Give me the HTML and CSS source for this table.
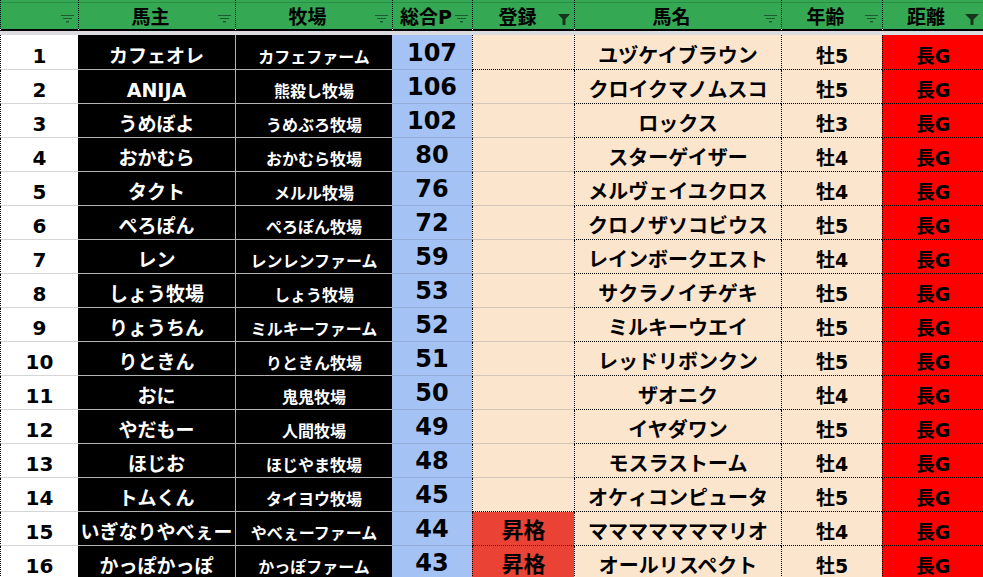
FILE: index.html
```html
<!DOCTYPE html>
<html lang="ja">
<head>
<meta charset="utf-8">
<title>Sheet</title>
<link rel="stylesheet" href="styles.css">
</head>
<body>
<div class="sheet">
  <div class="hc"><span class="ht"></span><svg class="fi" width="13" height="8" viewBox="0 0 13 8"><rect x="0" y="0" width="13" height="1"/><rect x="2" y="3" width="9" height="1"/><rect x="5" y="6" width="3" height="1.5"/></svg></div>
  <div class="hc"><span class="ht">馬主</span><svg class="fi" width="13" height="8" viewBox="0 0 13 8"><rect x="0" y="0" width="13" height="1"/><rect x="2" y="3" width="9" height="1"/><rect x="5" y="6" width="3" height="1.5"/></svg></div>
  <div class="hc"><span class="ht">牧場</span><svg class="fi" width="13" height="8" viewBox="0 0 13 8"><rect x="0" y="0" width="13" height="1"/><rect x="2" y="3" width="9" height="1"/><rect x="5" y="6" width="3" height="1.5"/></svg></div>
  <div class="hc"><span class="ht">総合P</span><svg class="fi" width="13" height="8" viewBox="0 0 13 8"><rect x="0" y="0" width="13" height="1"/><rect x="2" y="3" width="9" height="1"/><rect x="5" y="6" width="3" height="1.5"/></svg></div>
  <div class="hc"><span class="ht">登録</span><svg class="ff" width="12" height="11" viewBox="0 0 12 11"><polygon points="0,0 12,0 7.5,5 7.5,11 4.5,11 4.5,5"/></svg></div>
  <div class="hc"><span class="ht">馬名</span><svg class="fi" width="13" height="8" viewBox="0 0 13 8"><rect x="0" y="0" width="13" height="1"/><rect x="2" y="3" width="9" height="1"/><rect x="5" y="6" width="3" height="1.5"/></svg></div>
  <div class="hc"><span class="ht">年齢</span><svg class="fi" width="13" height="8" viewBox="0 0 13 8"><rect x="0" y="0" width="13" height="1"/><rect x="2" y="3" width="9" height="1"/><rect x="5" y="6" width="3" height="1.5"/></svg></div>
  <div class="hc"><span class="ht">距離</span><svg class="ff" width="14" height="11" viewBox="0 0 14 11"><polygon points="0,0 14,0 8.5,5.5 8.5,11 5.5,11 5.5,5.5"/></svg></div>

  <div class="freeze"></div>

  <div class="c num">1</div><div class="c owner">カフェオレ</div><div class="c farm">カフェファーム</div><div class="c pts">107</div><div class="c reg dot"></div><div class="c horse">ユヅケイブラウン</div><div class="c age">牡5</div><div class="c dist">長G</div>
  <div class="c num">2</div><div class="c owner">ANIJA</div><div class="c farm">熊殺し牧場</div><div class="c pts">106</div><div class="c reg"></div><div class="c horse">クロイクマノムスコ</div><div class="c age">牡5</div><div class="c dist">長G</div>
  <div class="c num">3</div><div class="c owner">うめぼよ</div><div class="c farm">うめぶろ牧場</div><div class="c pts">102</div><div class="c reg"></div><div class="c horse">ロックス</div><div class="c age">牡3</div><div class="c dist">長G</div>
  <div class="c num">4</div><div class="c owner">おかむら</div><div class="c farm">おかむら牧場</div><div class="c pts">80</div><div class="c reg"></div><div class="c horse">スターゲイザー</div><div class="c age">牡4</div><div class="c dist">長G</div>
  <div class="c num">5</div><div class="c owner">タクト</div><div class="c farm">メルル牧場</div><div class="c pts">76</div><div class="c reg"></div><div class="c horse">メルヴェイユクロス</div><div class="c age">牡4</div><div class="c dist">長G</div>
  <div class="c num">6</div><div class="c owner">ぺろぽん</div><div class="c farm">ぺろぽん牧場</div><div class="c pts">72</div><div class="c reg"></div><div class="c horse">クロノザソコビウス</div><div class="c age">牡5</div><div class="c dist">長G</div>
  <div class="c num">7</div><div class="c owner">レン</div><div class="c farm">レンレンファーム</div><div class="c pts">59</div><div class="c reg"></div><div class="c horse">レインボークエスト</div><div class="c age">牡4</div><div class="c dist">長G</div>
  <div class="c num">8</div><div class="c owner">しょう牧場</div><div class="c farm">しょう牧場</div><div class="c pts">53</div><div class="c reg"></div><div class="c horse">サクラノイチゲキ</div><div class="c age">牡5</div><div class="c dist">長G</div>
  <div class="c num">9</div><div class="c owner">りょうちん</div><div class="c farm">ミルキーファーム</div><div class="c pts">52</div><div class="c reg"></div><div class="c horse">ミルキーウエイ</div><div class="c age">牡5</div><div class="c dist">長G</div>
  <div class="c num">10</div><div class="c owner">りときん</div><div class="c farm">りときん牧場</div><div class="c pts">51</div><div class="c reg"></div><div class="c horse">レッドリボンクン</div><div class="c age">牡5</div><div class="c dist">長G</div>
  <div class="c num">11</div><div class="c owner">おに</div><div class="c farm">鬼鬼牧場</div><div class="c pts">50</div><div class="c reg"></div><div class="c horse">ザオニク</div><div class="c age">牡4</div><div class="c dist">長G</div>
  <div class="c num">12</div><div class="c owner">やだもー</div><div class="c farm">人間牧場</div><div class="c pts">49</div><div class="c reg"></div><div class="c horse">イヤダワン</div><div class="c age">牡5</div><div class="c dist">長G</div>
  <div class="c num">13</div><div class="c owner">ほじお</div><div class="c farm">ほじやま牧場</div><div class="c pts">48</div><div class="c reg"></div><div class="c horse">モスラストーム</div><div class="c age">牡4</div><div class="c dist">長G</div>
  <div class="c num">14</div><div class="c owner">トムくん</div><div class="c farm">タイヨウ牧場</div><div class="c pts">45</div><div class="c reg dot"></div><div class="c horse">オケィコンピュータ</div><div class="c age">牡5</div><div class="c dist">長G</div>
  <div class="c num">15</div><div class="c owner">いぎなりやべぇー</div><div class="c farm">やべぇーファーム</div><div class="c pts">44</div><div class="c reg dot up">昇格</div><div class="c horse">マママママママリオ</div><div class="c age">牡4</div><div class="c dist">長G</div>
  <div class="c num">16</div><div class="c owner">かっぽかっぽ</div><div class="c farm">かっぽファーム</div><div class="c pts">43</div><div class="c reg dot up">昇格</div><div class="c horse">オールリスペクト</div><div class="c age">牡5</div><div class="c dist">長G</div>
</div>
</body>
</html>
```

FILE: styles.css
```css
html, body {
  margin: 0;
  padding: 0;
  background: #ffffff;
  overflow: hidden;
}

.sheet {
  display: grid;
  grid-template-columns: 78px 157px 157px 80px 102px 207px 101px 101px;
  grid-template-rows: 31px 4px 35px;
  grid-auto-rows: 34px;
  width: 983px;
  font-family: "DejaVu Sans", "Noto Sans CJK JP", sans-serif;
  font-weight: 700;
  color: #000;
}

.hc {
  box-sizing: border-box;
  display: flex;
  align-items: flex-start;
  background: linear-gradient(#34a853 0 2px, #2b8c46 2px 3px, #34a853 3px);
  border-left: 1px dotted #000;
  border-bottom: 2px solid #000;
  min-width: 0;
}

.ht {
  flex: 1;
  text-align: center;
  font-size: 19px;
  line-height: 1;
  padding-top: 8px;
  white-space: nowrap;
  padding-left: 4px;
}

.fi {
  flex: none;
  margin-top: 15px;
  margin-right: 4px;
  fill: #1d5a2f;
}

.ff {
  flex: none;
  margin-top: 14px;
  margin-right: 4px;
  fill: #17351c;
}

.freeze {
  grid-column: 1 / -1;
  background: #dadce0;
}

.c {
  box-sizing: border-box;
  display: flex;
  align-items: flex-end;
  justify-content: center;
  line-height: 1;
  padding-bottom: 3px;
  white-space: nowrap;
  min-width: 0;
}

.num {
  background: #fff;
  border-left: 1px dotted #000;
  border-bottom: 1px solid #d6d6d6;
  font-size: 20px;
}

.owner {
  background: #000;
  color: #fff;
  border-bottom: 1px solid #b3b3b3;
  font-size: 19px;
}

.farm {
  background: #000;
  color: #fff;
  border-left: 1px solid #b3b3b3;
  border-bottom: 1px solid #b3b3b3;
  font-size: 16px;
}

.pts {
  background: #a4c2f4;
  border-bottom: 1px solid #93acd8;
  font-size: 24px;
  padding-bottom: 4px;
}

.reg {
  background: #fce5cd;
  border-left: 1px dotted #000;
  border-bottom: 1px solid #d2c6ba;
  font-size: 22px;
}

.reg.dot {
  border-bottom: 1px dotted #000;
}

.reg.up {
  background: #ea4335;
}

.horse {
  background: #fce5cd;
  border-left: 1px dotted #000;
  border-bottom: 1px dotted #000;
  font-size: 20px;
}

.age {
  background: #fce5cd;
  border-left: 1px dotted #000;
  border-bottom: 1px dotted #000;
  font-size: 19px;
}

.dist {
  background: #ff0000;
  border-left: 1px dotted #000;
  border-bottom: 1px dotted #000;
  font-size: 19px;
}
```
